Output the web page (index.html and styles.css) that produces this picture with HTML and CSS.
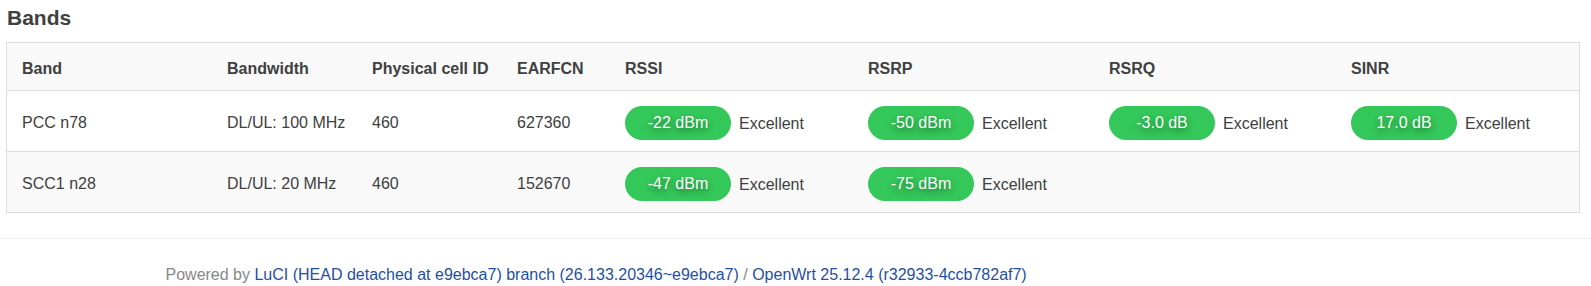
FILE: index.html
```html
<!DOCTYPE html>
<html lang="en">
<head>
<meta charset="utf-8">
<title>Bands</title>
<link rel="stylesheet" href="styles.css">
</head>
<body>
<div class="page">
  <h3 class="section-title">Bands</h3>
  <table class="bands">
    <thead>
      <tr>
        <th class="c-band">Band</th>
        <th class="c-bw">Bandwidth</th>
        <th class="c-pci">Physical cell ID</th>
        <th class="c-earfcn">EARFCN</th>
        <th class="c-rssi">RSSI</th>
        <th class="c-rsrp">RSRP</th>
        <th class="c-rsrq">RSRQ</th>
        <th class="c-sinr">SINR</th>
      </tr>
    </thead>
    <tbody>
      <tr>
        <td>PCC n78</td>
        <td>DL/UL: 100 MHz</td>
        <td>460</td>
        <td>627360</td>
        <td><span class="badge">-22 dBm</span><span class="quality">Excellent</span></td>
        <td><span class="badge">-50 dBm</span><span class="quality">Excellent</span></td>
        <td><span class="badge">-3.0 dB</span><span class="quality">Excellent</span></td>
        <td><span class="badge">17.0 dB</span><span class="quality">Excellent</span></td>
      </tr>
      <tr class="alt">
        <td>SCC1 n28</td>
        <td>DL/UL: 20 MHz</td>
        <td>460</td>
        <td>152670</td>
        <td><span class="badge">-47 dBm</span><span class="quality">Excellent</span></td>
        <td><span class="badge">-75 dBm</span><span class="quality">Excellent</span></td>
        <td></td>
        <td></td>
      </tr>
    </tbody>
  </table>
</div>
<footer class="footer">
  <div class="footer-inner">
    <span class="muted">Powered by</span> <a href="#">LuCI (HEAD detached at e9ebca7) branch (26.133.20346~e9ebca7)</a> <span class="muted">/</span> <a href="#">OpenWrt 25.12.4 (r32933-4ccb782af7)</a>
  </div>
</footer>
</body>
</html>
```
FILE: styles.css
```css
html, body {
  margin: 0;
  padding: 0;
  background: #fff;
}

body {
  font-family: "Liberation Sans", Arial, Helvetica, sans-serif;
  font-size: 16px;
  color: #404040;
}

.page {
  padding: 6px 11px 0 6px;
}

.section-title {
  margin: 0 0 12px 1px;
  font-size: 21px;
  line-height: 24px;
  font-weight: bold;
  color: #404040;
}

.bands {
  width: 100%;
  table-layout: fixed;
  border-collapse: separate;
  border-spacing: 0;
  border: 1px solid #dddddd;
}

.bands th,
.bands td {
  text-align: left;
  vertical-align: middle;
  padding: 0 15px;
  line-height: 20px;
  white-space: nowrap;
}

.bands th {
  font-weight: bold;
  background: #f9f9f9;
  padding-top: 16px;
  padding-bottom: 11px;
}

.bands td {
  border-top: 1px solid #dddddd;
  padding-top: 15px;
  padding-bottom: 11px;
  height: 34px;
}

.bands .alt td {
  background: #f9f9f9;
}

.c-band { width: 175px; }
.c-bw { width: 115px; }
.c-pci { width: 115px; }
.c-earfcn { width: 78px; }
.c-rssi { width: 213px; }
.c-rsrp { width: 211px; }
.c-rsrq { width: 212px; }

.badge {
  display: inline-block;
  vertical-align: middle;
  box-sizing: border-box;
  min-width: 106px;
  height: 34px;
  line-height: 34px;
  padding: 0 16px;
  border-radius: 17px;
  background: #34c759;
  color: #fff;
  text-align: center;
  text-shadow: 0 3px 6px rgba(0, 0, 0, 0.45);
}

.quality {
  display: inline-block;
  vertical-align: middle;
  margin-left: 8px;
  padding-top: 1px;
}

.footer {
  margin-top: 25px;
  border-top: 1px solid #eeeeee;
}

.footer-inner {
  max-width: 1260px;
  margin: 0 auto;
  padding-top: 26px;
  line-height: 20px;
}

.muted {
  color: #888888;
}

.footer a {
  color: #1f4fa2;
  text-decoration: none;
}
```
